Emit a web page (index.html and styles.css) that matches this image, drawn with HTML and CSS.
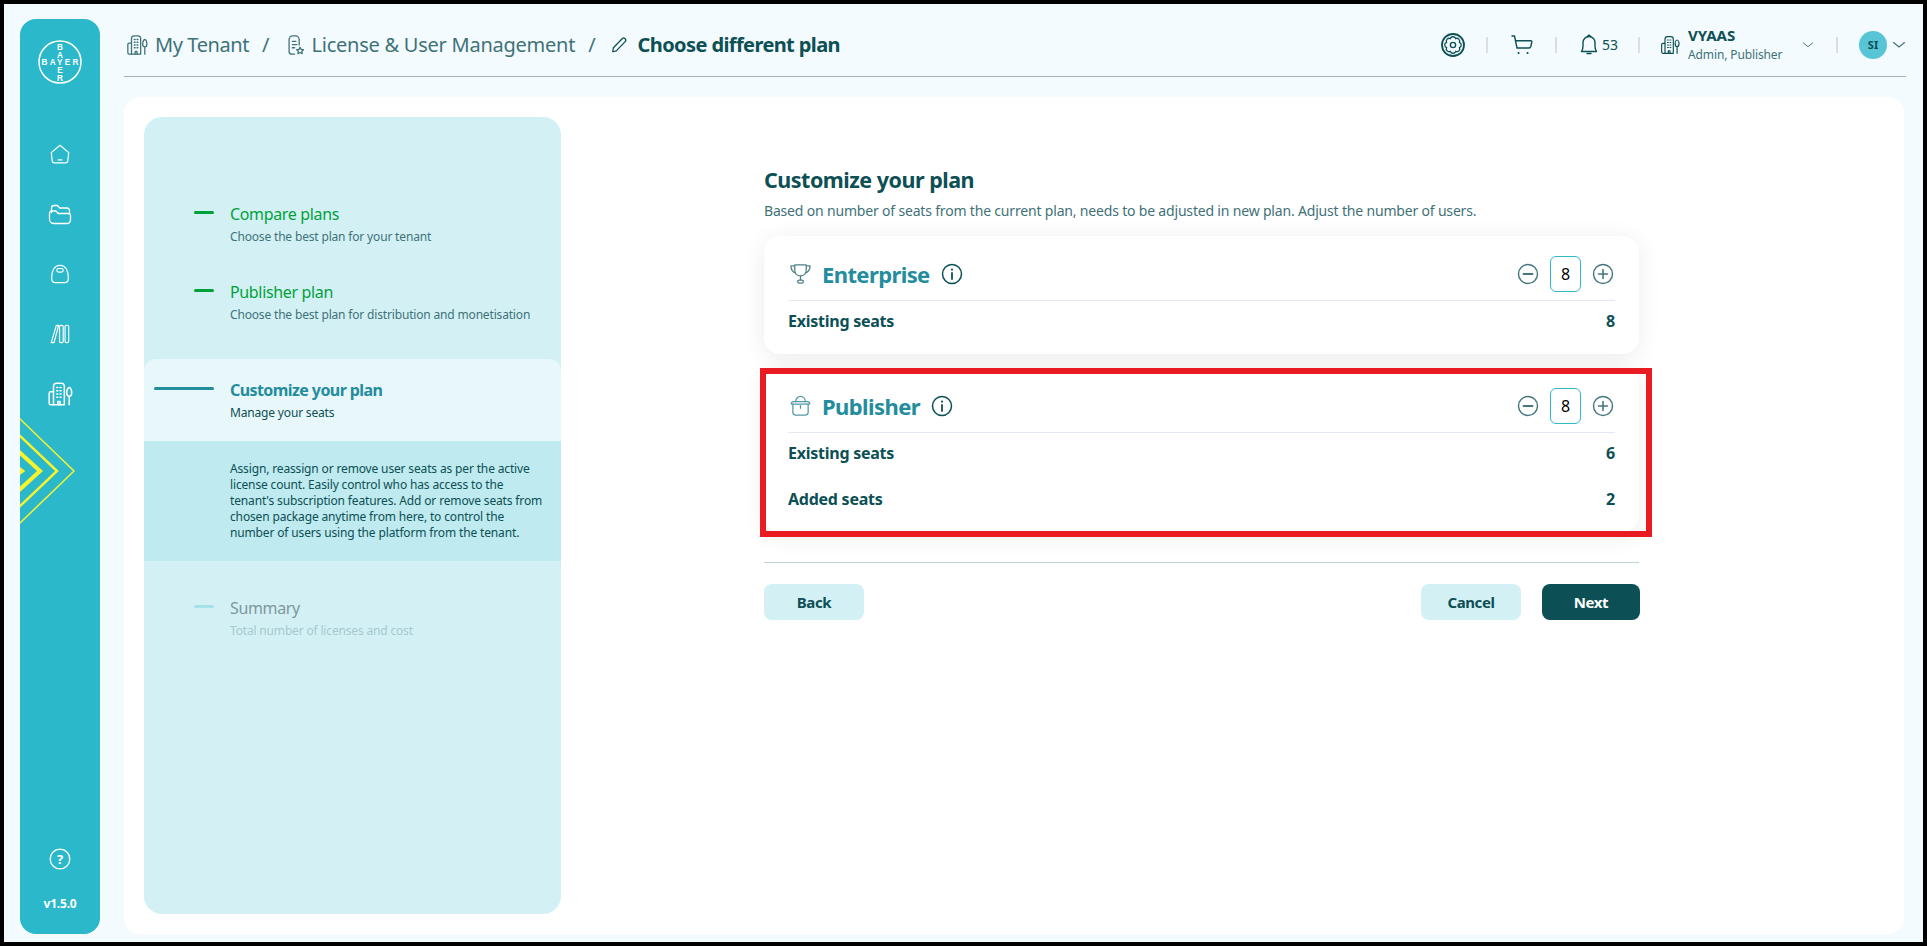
FILE: index.html
```html
<!DOCTYPE html>
<html lang="en">
<head>
<meta charset="utf-8">
<title>Choose different plan</title>
<link rel="stylesheet" href="styles.css">
</head>
<body>
<svg class="sprite" width="0" height="0">
  <symbol id="building" viewBox="0 0 24 24"><g fill="none" stroke="currentColor" stroke-width="1.4" stroke-linejoin="round" stroke-linecap="round"><path d="M6 22V5a3 3 0 0 1 3-3h4a3 3 0 0 1 3 3v17z"/><path d="M6 10H3.500A1.500 1.500 0 0 0 2 11.500V20.500A1.500 1.500 0 0 0 3.500 22H6"/><path d="M9 6h1M12 6h1M9 9h1M12 9h1M9 12h1M12 12h1M9 15h1M12 15h1"/><path d="M10 22v-3h2v3"/><path d="M20.500 22v-8M20.500 14c-1.500 0-2.300-1.500-2.300-3.500S19.300 6 20.500 6s2.300 2.500 2.300 4.500S22 14 20.500 14z"/></g></symbol>
  <symbol id="info" viewBox="0 0 22 22"><g fill="none" stroke="currentColor" stroke-linecap="round"><circle cx="11" cy="11" r="9.500" stroke-width="1.500"/><path d="M11 10v6" stroke-width="1.800"/><path d="M11 6.500v.1" stroke-width="2.200"/></g></symbol>
  <symbol id="minus" viewBox="0 0 22 22"><g fill="none" stroke="currentColor" stroke-linecap="round"><circle cx="11" cy="11" r="9.500" stroke-width="1.400"/><path d="M6.500 11h9" stroke-width="1.800"/></g></symbol>
  <symbol id="plus" viewBox="0 0 22 22"><g fill="none" stroke="currentColor" stroke-linecap="round"><circle cx="11" cy="11" r="9.500" stroke-width="1.400"/><path d="M6.500 11h9M11 6.500v9" stroke-width="1.600"/></g></symbol>
  <symbol id="chev" viewBox="0 0 14 8"><path d="M1.500 1.500 7 6l5.500-4.500" fill="none" stroke="currentColor" stroke-width="1.100" stroke-linecap="round" stroke-linejoin="round"/></symbol>
</svg>

<div class="frame">
  <aside class="rail">
    <svg class="logo" viewBox="0 0 44 44" width="44" height="44">
      <circle cx="22" cy="22" r="21" fill="none" stroke="#fff" stroke-width="1.500"/>
      <g class="logo-text">
        <text x="22" y="25" text-anchor="middle" textLength="37">BAYER</text>
        <text x="22" y="10" text-anchor="middle">B</text>
        <text x="22" y="17.500" text-anchor="middle">A</text>
        <text x="22" y="33" text-anchor="middle">E</text>
        <text x="22" y="40.500" text-anchor="middle">R</text>
      </g>
    </svg>
    <nav class="rail-nav">
      <svg class="rail-icon" viewBox="0 0 24 24"><path d="M2.500 10.500 12 2.500l9.500 8-1 9a2.500 2.500 0 0 1-2.500 2.200H6a2.500 2.500 0 0 1-2.500-2.200z"/><path d="M10 18.500h4"/></svg>
      <svg class="rail-icon rail-folder" viewBox="0 0 24 24"><path d="M3.500 10.500V6A2.500 2.500 0 0 1 6 3.500h3.500l2.200 2.500h7.300A2.500 2.500 0 0 1 21.500 8.500v2"/><path d="M1.500 11.500A2.500 2.500 0 0 1 4 9h4l2.200 2.500h10.300a2 2 0 0 1 2 2V18a3.500 3.500 0 0 1-3.500 3.500H6A4.500 4.500 0 0 1 1.500 17z"/></svg>
      <svg class="rail-icon" viewBox="0 0 24 24"><path d="M3 15.500C3 9 5.500 2.500 12 2.500S21 9 21 15.500V18a3.500 3.500 0 0 1-3.500 3.500h-11A3.500 3.500 0 0 1 3 18z"/><rect x="8.500" y="6" width="7" height="4" rx="2"/></svg>
      <svg class="rail-icon" viewBox="0 0 24 24"><path d="M2.500 21.500 8 2.500h2.500L5.500 21.500z"/><rect x="11.500" y="2.500" width="4" height="19" rx="1.500"/><rect x="17.500" y="2.500" width="4" height="19" rx="1.500"/></svg>
      <svg class="rail-icon rail-solid" viewBox="0 0 24 24"><use href="#building"/></svg>
    </nav>
    <div class="rail-foot">
      <svg class="help" viewBox="0 0 22 22"><circle cx="11" cy="11" r="9.800" fill="none" stroke="#fff" stroke-width="1.300"/><text x="11" y="15.500" text-anchor="middle">?</text></svg>
      <div class="version">v1.5.0</div>
    </div>
    <svg class="arrows" viewBox="0 0 60 112" width="60" height="112">
      <path d="M-2 2 54 56-2 110" stroke-width="1.500"/>
      <path d="M-2 19 37 56-2 93" stroke-width="2.500"/>
      <path d="M-2 36 20 56-2 76" stroke-width="4"/>
      <path d="M-2 53 2 56-2 59" stroke-width="4"/>
    </svg>
  </aside>

  <div class="main">
    <header class="topbar">
      <div class="crumbs">
        <svg class="crumb-icon" viewBox="0 0 24 24"><use href="#building"/></svg>
        <span class="crumb crumb-tenant">My Tenant</span>
        <span class="slash">/</span>
        <svg class="crumb-icon crumb-doc" viewBox="0 0 20 24"><g fill="none" stroke="currentColor" stroke-width="1.400" stroke-linecap="round" stroke-linejoin="round"><path d="M9 22H6a3 3 0 0 1-3-3V6a4 4 0 0 1 4-4h3a4 4 0 0 1 4 4v6"/><path d="M6.500 8h4M6.500 11.500h5M6.500 15h2.500"/><path d="m15 14.500 1.200 2.300 2.500.3-1.800 1.800.4 2.500-2.300-1.200-2.300 1.200.4-2.500-1.800-1.800 2.500-.3z"/></g></svg>
        <span class="crumb">License &amp; User Management</span>
        <span class="slash">/</span>
        <svg class="crumb-icon crumb-pen" viewBox="0 0 20 20"><path d="M3 17.500 3.800 13 13.500 3a2.300 2.300 0 0 1 3.300 3.300L7 16.500z" fill="none" stroke="currentColor" stroke-width="1.400" stroke-linejoin="round"/></svg>
        <strong class="crumb-now">Choose different plan</strong>
      </div>
      <div class="tools">
        <svg class="tool-gear" viewBox="0 0 24 24"><g fill="none" stroke="currentColor"><circle cx="12" cy="12" r="11" stroke-width="1.800"/><path d="M18.470 9.320A2.900 2.900 0 0 1 18.470 14.680 2.900 2.900 0 0 1 14.680 18.470 2.900 2.900 0 0 1 9.320 18.470 2.900 2.900 0 0 1 5.530 14.680 2.900 2.900 0 0 1 5.530 9.320 2.900 2.900 0 0 1 9.320 5.530 2.900 2.900 0 0 1 14.680 5.530 2.900 2.900 0 0 1 18.470 9.320z" stroke-width="1.300"/><circle cx="12" cy="12" r="2.600" stroke-width="1.400"/></g></svg>
        <i class="sep sep-a"></i>
        <svg class="tool-cart" viewBox="0 0 22 22"><g fill="none" stroke="currentColor" stroke-width="1.400" stroke-linecap="round" stroke-linejoin="round"><path d="M1 2h2.500l2.500 12h12a2 2 0 0 0 1.800-1.500l1-4.500a1 1 0 0 0-1-1.300H4.500"/><path d="M7.500 19h.1M16.500 19h.1" stroke-width="2"/></g></svg>
        <i class="sep sep-b"></i>
        <svg class="tool-bell" viewBox="0 0 18 22"><g fill="none" stroke="currentColor" stroke-width="1.400" stroke-linejoin="round"><path d="M1.500 17.500c1.200-1.500 1.500-3 1.500-5.500V8.500a6 6 0 0 1 12 0V12c0 2.500.3 4 1.500 5.500z"/><path d="M7.500 2.200 9 1l1.500 1.200M7 19.500h4" stroke-linecap="round"/></g></svg>
        <span class="count">53</span>
        <i class="sep sep-c"></i>
        <svg class="tool-building" viewBox="0 0 24 24"><use href="#building"/></svg>
        <div class="org">
          <div class="org-name">VYAAS</div>
          <div class="org-role">Admin, Publisher</div>
        </div>
        <svg class="chev chev-org" viewBox="0 0 14 8"><use href="#chev"/></svg>
        <i class="sep sep-d"></i>
        <div class="avatar">SI</div>
        <svg class="chev chev-user" viewBox="0 0 14 8"><use href="#chev"/></svg>
      </div>
    </header>

    <section class="sheet">
      <aside class="steps">
        <div class="step step-done">
          <i class="dash"></i>
          <div><div class="step-title">Compare plans</div><div class="step-sub">Choose the best plan for your tenant</div></div>
        </div>
        <div class="step step-done">
          <i class="dash"></i>
          <div><div class="step-title">Publisher plan</div><div class="step-sub">Choose the best plan for distribution and monetisation</div></div>
        </div>
        <div class="step step-active">
          <i class="dash"></i>
          <div><div class="step-title">Customize your plan</div><div class="step-sub">Manage your seats</div></div>
        </div>
        <p class="step-desc">Assign, reassign or remove user seats as per the active license count. Easily control who has access to the tenant's subscription features. Add or remove seats from chosen package anytime from here, to control the number of users using the platform from the tenant.</p>
        <div class="step step-todo">
          <i class="dash"></i>
          <div><div class="step-title">Summary</div><div class="step-sub">Total number of licenses and cost</div></div>
        </div>
      </aside>

      <div class="content">
        <h1 class="page-title">Customize your plan</h1>
        <p class="page-sub">Based on number of seats from the current plan, needs to be adjusted in new plan. Adjust the number of users.</p>

        <article class="plan">
          <div class="plan-head">
            <svg class="plan-icon" viewBox="0 0 22 22"><g fill="none" stroke="#4f8087" stroke-width="1.300" stroke-linejoin="round"><path d="M5 2h12v5.500c0 3.500-2.500 6-6 6s-6-2.500-6-6z"/><path d="M5 3H1c0 4 1.500 6.500 5 7.500M17 3h4c0 4-1.500 6.500-5 7.500"/><path d="M11 13.500V18"/><rect x="8" y="18" width="6" height="3" rx="1.500"/></g></svg>
            <h2 class="plan-name">Enterprise</h2>
            <svg class="info" viewBox="0 0 22 22"><use href="#info"/></svg>
            <div class="stepper">
              <svg class="round" viewBox="0 0 22 22"><use href="#minus"/></svg>
              <div class="qty">8</div>
              <svg class="round" viewBox="0 0 22 22"><use href="#plus"/></svg>
            </div>
          </div>
          <div class="rows">
            <div class="row"><span>Existing seats</span><span>8</span></div>
          </div>
        </article>

        <article class="plan plan-marked">
          <div class="plan-head">
            <svg class="plan-icon" viewBox="0 0 22 22"><g fill="none" stroke="#4f9aa5" stroke-width="1.300" stroke-linejoin="round" stroke-linecap="round"><path d="M1.500 9.500C1 8 2 7 3.500 7h15c1.500 0 2.500 1 2 2.500z"/><path d="M6 7c0-3 2-5.500 5-5.500S16 4 16 7"/><path d="M3 9.500V18a3 3 0 0 0 3 3h10a3 3 0 0 0 3-3V9.500"/><path d="M11 11v3"/></g></svg>
            <h2 class="plan-name">Publisher</h2>
            <svg class="info" viewBox="0 0 22 22"><use href="#info"/></svg>
            <div class="stepper">
              <svg class="round" viewBox="0 0 22 22"><use href="#minus"/></svg>
              <div class="qty">8</div>
              <svg class="round" viewBox="0 0 22 22"><use href="#plus"/></svg>
            </div>
          </div>
          <div class="rows">
            <div class="row"><span>Existing seats</span><span>6</span></div>
            <div class="row"><span>Added seats</span><span>2</span></div>
          </div>
          <div class="marker"></div>
        </article>

        <div class="actions">
          <button class="btn btn-soft btn-back">Back</button>
          <button class="btn btn-soft">Cancel</button>
          <button class="btn btn-dark">Next</button>
        </div>
      </div>
    </section>
  </div>
</div>
</body>
</html>
```
FILE: styles.css
```css
* { box-sizing: border-box; }
html, body { margin: 0; height: 100%; }
body {
  background: #000;
  padding: 4px;
  font-family: "Noto Sans", "Liberation Sans", sans-serif;
  color: #0c4f55;
  overflow: hidden;
}
.sprite { position: absolute; }
.frame {
  height: 938px;
  background: #f3fbfe;
  display: flex;
  padding: 15px 17px 8px 16px;
}

/* left rail */
.rail {
  position: relative;
  width: 80px;
  flex: none;
  background: #2bb8cb;
  border-radius: 16px;
  display: flex;
  flex-direction: column;
  align-items: center;
  padding-top: 21px;
  color: #fff;
}
.logo { flex: none; display: block; }
.logo-text text { font: 700 8.200px "Liberation Sans", sans-serif; fill: #fff; letter-spacing: .2px; }
.rail-nav { display: flex; flex-direction: column; align-items: center; gap: 38px; margin-top: 59px; }
.rail-icon { width: 22px; height: 22px; fill: none; stroke: #fff; stroke-width: 1.300; stroke-linejoin: round; stroke-linecap: round; display: block; }
.rail-folder { width: 24px; height: 24px; margin: -1px 0; }
.rail-solid { width: 26px; height: 26px; margin: -2px 0; color: #fff; stroke: none; }
.rail-foot { margin-top: auto; display: flex; flex-direction: column; align-items: center; padding-bottom: 22px; }
.help { width: 22px; height: 22px; display: block; }
.help text { font: 700 13px "Noto Sans", sans-serif; fill: #fff; }
.version { margin-top: 26px; font-size: 12px; line-height: 16px; font-weight: 700; color: #fff; letter-spacing: -.2px; }
.arrows { position: absolute; left: 0; top: 396px; overflow: hidden; fill: none; stroke: #f8f32b; }
.arrows path { fill: none; }

/* header */
.main { flex: 1; min-width: 0; margin-left: 24px; display: flex; flex-direction: column; }
.topbar {
  height: 58px;
  flex: none;
  border-bottom: 1px solid #a9b1b5;
  display: flex;
  align-items: center;
  justify-content: space-between;
  padding: 0 0 6px 2px;
  position: relative;
}
.crumbs { display: flex; align-items: center; }
.crumb-icon { width: 22px; height: 22px; color: #3f7278; flex: none; display: block; }
.crumb-doc { width: 19px; margin-right: 7px; margin-left: 16px; }
.crumb-pen { width: 18px; height: 18px; color: #0c4f55; margin-left: 14px; margin-right: 10px; }
.crumb { font-size: 20px; line-height: 28px; color: #3f7278; letter-spacing: -.25px; }
.crumb-tenant { margin-left: 7px; letter-spacing: -.4px; }
.slash { font-size: 20px; color: #3f7278; margin-left: 13px; }
.crumb-now { font-size: 20px; line-height: 28px; font-weight: 700; color: #0c4f55; letter-spacing: -.6px; }
.tools { display: flex; align-items: center; color: #0c4f55; }
.sep { display: block; width: 2px; height: 16px; background: #d9dfe1; flex: none; }
.tool-gear { width: 24px; height: 24px; display: block; }
.sep-a { margin-left: 21px; }
.tool-cart { width: 22px; height: 22px; margin-left: 23px; display: block; }
.sep-b { margin-left: 22px; }
.tool-bell { width: 18px; height: 22px; margin-left: 23px; display: block; }
.count { font-size: 14px; margin-left: 4px; color: #0c4f55; width: 16px; }
.sep-c { margin-left: 20px; }
.tool-building { width: 20px; height: 20px; margin-left: 20px; display: block; }
.org { margin-left: 8px; width: 103px; }
.org-name { font-size: 15px; line-height: 19px; font-weight: 700; color: #0c4f55; }
.org-role { font-size: 12px; line-height: 18px; color: #3f7278; white-space: nowrap; letter-spacing: -.12px; margin-top: 1px; }
.chev { width: 14px; height: 8px; display: block; color: #3f7278; }
.chev-org { width: 12px; margin-left: 11px; }
.sep-d { margin-left: 22px; }
.avatar {
  width: 28px; height: 28px; border-radius: 50%; background: #57c5d6;
  margin-left: 21px; font-size: 11px; font-weight: 700; color: #0c4f55;
  display: flex; align-items: center; justify-content: center;
}
.chev-user { margin-left: 5px; }

/* sheet */
.sheet {
  flex: 1;
  margin: 20px 2px 0 0;
  background: #fff;
  border-radius: 16px;
  padding: 20px;
  display: flex;
  min-height: 0;
}
.steps {
  width: 417px;
  flex: none;
  background: #d3f1f5;
  border-radius: 18px;
  padding-top: 64px;
  overflow: hidden;
}
.step { display: flex; padding: 22px 20px 0 10px; height: 78px; }
.dash { display: block; flex: none; width: 60px; margin: 8px 16px 0 0; height: 3px; position: relative; }
.dash::after { content: ""; position: absolute; right: 0; top: 0; height: 3px; width: 20px; border-radius: 2px; background: currentColor; }
.step-title { font-size: 16px; line-height: 22px; letter-spacing: -.35px; }
.step-sub { font-size: 12px; line-height: 16px; margin-top: 4px; letter-spacing: -.17px; }
.step-done .dash { color: #00a13a; }
.step-done .step-title { color: #00a13a; }
.step-done .step-sub { color: #3f7278; }
.step-active {
  height: 82px;
  margin-top: 22px;
  padding-top: 20px;
  background: #e8f7f9;
  border-radius: 12px 12px 0 0;
}
.step-active .dash { color: #238c9d; }
.step-active .dash::after { width: 60px; }
.step-active .step-title { color: #238c9d; font-weight: 700; letter-spacing: -.58px; }
.step-active .step-sub { color: #0c4f55; }
.step-desc {
  margin: 0;
  background: #bfeaef;
  padding: 20px 15px 20px 86px;
  font-size: 12px;
  line-height: 16px;
  color: #0c4f55;
  letter-spacing: -.15px;
}
.step-todo { margin-top: 14px; }
.step-todo .dash { color: #a6e0e9; }
.step-todo .step-title { color: #7f979c; }
.step-todo .step-sub { color: #a6c8cf; }

/* content */
.content { width: 875px; margin-left: 203px; padding-top: 48px; display: flex; flex-direction: column; }
.page-title { margin: 0; font-size: 21.500px; line-height: 30px; font-weight: 700; color: #0c4f55; letter-spacing: -.5px; }
.page-sub { margin: 6px 0 15px; font-size: 14px; line-height: 20px; color: #3f7278; letter-spacing: -.18px; }
.plan {
  position: relative;
  background: #fff;
  border-radius: 16px;
  padding: 0 24px 13px;
  box-shadow: 0 4px 24px rgba(0, 0, 0, .08);
}
.plan + .plan { margin-top: 14px; }
.plan-head { height: 65px; padding-top: 11px; border-bottom: 1px solid #e3e9f1; display: flex; align-items: center; }
.plan-icon { width: 21px; height: 21px; margin-left: 2px; flex: none; display: block; }
.plan-name { margin: 0 0 0 11px; font-size: 22px; line-height: 30px; font-weight: 700; color: #238c9d; letter-spacing: -.6px; }
.info { width: 22px; height: 22px; color: #0c4f55; margin-left: 11px; display: block; }
.stepper { margin-left: auto; display: flex; align-items: center; gap: 11px; margin-right: 1px; }
.round { width: 22px; height: 22px; color: #44767c; display: block; }
.qty {
  width: 31px; height: 36px; border: 1px solid #2fb8cc; border-radius: 6px;
  display: flex; align-items: center; justify-content: center;
  font-size: 16px; color: #000;
}
.rows { display: flex; flex-direction: column; gap: 6px; }
.row {
  height: 40px; display: flex; align-items: center; justify-content: space-between;
  font-size: 16px; font-weight: 700; color: #0c4f55; letter-spacing: -.25px;
}
.marker {
  position: absolute;
  left: -4px; top: 0; right: -13px; bottom: -5px;
  border: 6px solid #e91c21;
  pointer-events: none;
}
.actions {
  margin-top: 30px;
  border-top: 1px solid #bcd5d8;
  padding-top: 21px;
  display: flex;
  gap: 21px;
}
.btn {
  width: 100px; height: 36px; border: 0; border-radius: 8px;
  font: 700 15px "Noto Sans", sans-serif; padding: 0; letter-spacing: -.4px;
}
.btn-soft { background: #d3f1f5; color: #0c4f55; }
.btn-dark { background: #0c4f55; color: #fff; width: 98px; margin-right: -1px; }
.btn-back { margin-right: auto; }
```
